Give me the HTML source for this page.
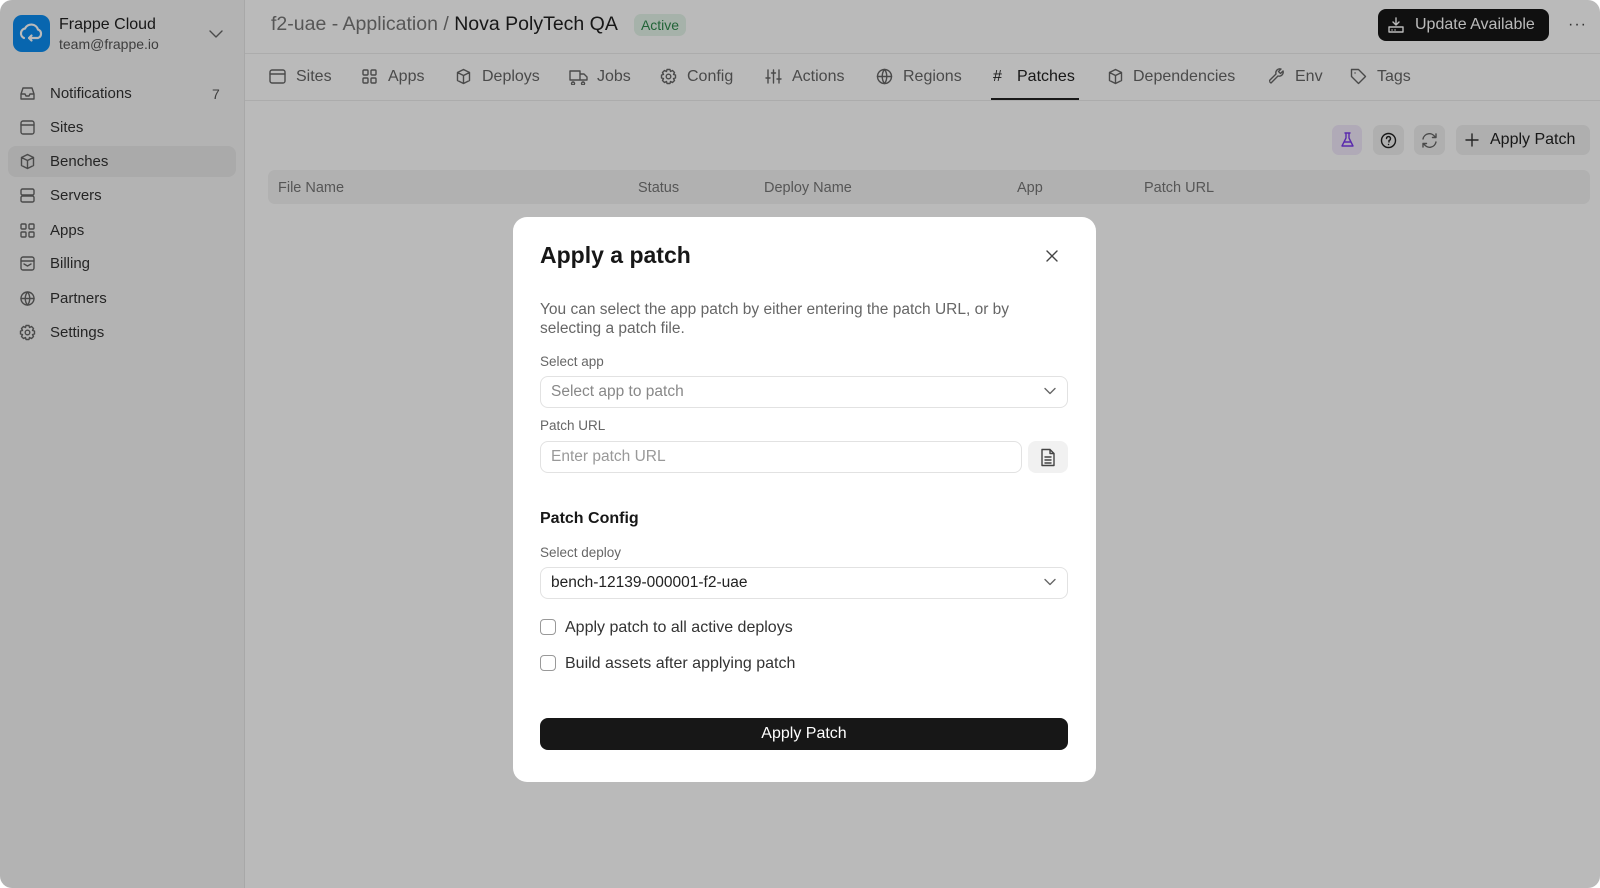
<!DOCTYPE html>
<html><head><meta charset="utf-8"><style>
*{box-sizing:border-box;margin:0;padding:0}
body{width:1600px;height:888px;background:#fff;font-family:"Liberation Sans",sans-serif;overflow:hidden;position:relative}
.frame{position:absolute;left:0;top:0;width:1600px;height:888px;border-radius:12px;overflow:hidden;background:#fff}
.side{position:absolute;left:0;top:0;width:245px;height:888px;background:#f6f6f6;border-right:1px solid #e6e6e6}
.abs{position:absolute}
.ic{position:absolute;stroke:#666;fill:none;stroke-width:1.4;stroke-linecap:round;stroke-linejoin:round}
.sitem{position:absolute;left:50px;font-size:15px;color:#333}
.tab{position:absolute;top:68px;font-size:16px;color:#666}
.th{position:absolute;top:179px;font-size:14.5px;color:#777}
.ov{position:absolute;inset:0;background:rgba(0,0,0,0.27)}
.modal{position:absolute;left:513px;top:217px;width:583px;height:565px;background:#fff;border-radius:14px}
.lbl{position:absolute;left:27px;font-size:13.5px;color:#666}
.box{position:absolute;left:27px;width:528px;height:32px;border:1px solid #e2e2e2;border-radius:8px;font-size:15.5px;padding-left:10px;line-height:30px}
.cb{position:absolute;left:27px;width:16px;height:16px;border:1.5px solid #999;border-radius:4px}
.cbt{position:absolute;left:52px;font-size:16px;color:#333}
</style></head><body><div class="frame">
<div class="side">
 <div class="abs" style="left:13px;top:15px;width:37px;height:37px;border-radius:9px;background:#0b8df0"></div>
 <svg class="abs" style="left:13px;top:15px" width="37" height="37" viewBox="0 0 37 37"><path d="M11 23a5 5 0 0 1 1-9.5 7 7 0 0 1 13 1 4.5 4.5 0 0 1 0 8.5H16M16 23l2.5-2.5M16 23l2.5 2.5" stroke="#fff" stroke-width="2.2" fill="none" stroke-linecap="round"/></svg>
 <div class="abs" style="left:59px;top:16px;font-size:16px;color:#222">Frappe Cloud</div>
 <div class="abs" style="left:59px;top:36px;font-size:14px;color:#555">team@frappe.io</div>
 <svg class="ic" style="left:209px;top:29px" width="14" height="10"><path d="M1 2l6 6 6-6"/></svg>
 <div class="abs" style="left:8px;top:146px;width:228px;height:31px;background:#e9e9e9;border-radius:8px"></div>
 <svg class="ic" style="left:19px;top:85px" width="17" height="17"><path d="M2 9h4l1 2h3l1-2h4M2 9l2-6h9l2 6v5H2z"/></svg>
 <div class="sitem" style="top:85px">Notifications</div><div class="abs" style="left:212px;top:86px;font-size:14px;color:#555">7</div>
 <svg class="ic" style="left:19px;top:119px" width="17" height="17"><rect x="2" y="2" width="13" height="13" rx="2"/><path d="M2 6h13"/></svg>
 <div class="sitem" style="top:119px">Sites</div>
 <svg class="ic" style="left:19px;top:153px" width="17" height="17"><path d="M8.5 1.5l6 3v8l-6 3-6-3v-8zM2.5 4.5l6 3 6-3M8.5 7.5v8"/></svg>
 <div class="sitem" style="top:153px">Benches</div>
 <svg class="ic" style="left:19px;top:187px" width="17" height="17"><rect x="2" y="2" width="13" height="6" rx="1.5"/><rect x="2" y="9" width="13" height="6" rx="1.5"/></svg>
 <div class="sitem" style="top:187px">Servers</div>
 <svg class="ic" style="left:19px;top:222px" width="17" height="17"><rect x="2" y="2" width="5" height="5" rx="1"/><rect x="10" y="2" width="5" height="5" rx="1"/><rect x="2" y="10" width="5" height="5" rx="1"/><rect x="10" y="10" width="5" height="5" rx="1"/></svg>
 <div class="sitem" style="top:222px">Apps</div>
 <svg class="ic" style="left:19px;top:255px" width="17" height="17"><rect x="2" y="2" width="13" height="13" rx="2"/><path d="M2 6h13M5 9l3.5 2 3.5-2"/></svg>
 <div class="sitem" style="top:255px">Billing</div>
 <svg class="ic" style="left:19px;top:290px" width="17" height="17"><circle cx="8.5" cy="8.5" r="6.5"/><path d="M2 8.5h13M8.5 2c-3 3.5-3 9.5 0 13M8.5 2c3 3.5 3 9.5 0 13"/></svg>
 <div class="sitem" style="top:290px">Partners</div>
 <svg class="ic" style="left:19px;top:324px" width="17" height="17"><circle cx="8.5" cy="8.5" r="2.3"/><path d="M7 1.5h3l.5 2 2-1 2 2-1 2 2 .5v3l-2 .5 1 2-2 2-2-1-.5 2H7l-.5-2-2 1-2-2 1-2-2-.5V7l2-.5-1-2 2-2 2 1z"/></svg>
 <div class="sitem" style="top:324px">Settings</div>
</div>
<div class="abs" style="left:245px;top:53px;width:1355px;height:1px;background:#ececec"></div>
<div class="abs" style="left:245px;top:100px;width:1355px;height:1px;background:#ececec"></div>
<div class="abs" style="left:271px;top:13px;font-size:19.5px;color:#777">f2-uae - Application / <span style="color:#222">Nova PolyTech QA</span></div>
<div class="abs" style="left:634px;top:14px;width:52px;height:22px;border-radius:7px;background:#e4f5e9;color:#2f8a4d;font-size:14px;text-align:center;line-height:22px">Active</div>
<div class="abs" style="left:1378px;top:9px;width:171px;height:32px;border-radius:8px;background:#171717;color:#fff;font-size:16px;line-height:32px;padding-left:37px">Update Available</div>
<svg class="ic" style="left:1387px;top:16px;stroke:#fff" width="18" height="18"><path d="M9 2v7M6 6l3 3 3-3M2 11h14v5H2zM5 14h.1M8 14h.1"/></svg>
<div class="abs" style="left:1568px;top:16px;font-size:16px;color:#444;letter-spacing:1px">···</div>
<svg class="ic" style="left:269px;top:68px" width="17" height="17"><rect x="1" y="2" width="15" height="13" rx="2"/><path d="M1 6h15"/></svg><div class="tab" style="left:296px">Sites</div>
<svg class="ic" style="left:361px;top:68px" width="17" height="17"><rect x="2" y="2" width="5" height="5" rx="1"/><rect x="10" y="2" width="5" height="5" rx="1"/><rect x="2" y="10" width="5" height="5" rx="1"/><rect x="10" y="10" width="5" height="5" rx="1"/></svg><div class="tab" style="left:388px">Apps</div>
<svg class="ic" style="left:455px;top:68px" width="17" height="17"><path d="M8.5 1.5l6 3v8l-6 3-6-3v-8zM2.5 4.5l6 3 6-3M8.5 7.5v8"/></svg><div class="tab" style="left:482px">Deploys</div>
<svg class="ic" style="left:569px;top:68px" width="19" height="17"><path d="M1 3h10v9H1zM11 6h4l3 3v3h-7M4 14a1.5 1.5 0 1 0 .1 0M14 14a1.5 1.5 0 1 0 .1 0"/></svg><div class="tab" style="left:597px">Jobs</div>
<svg class="ic" style="left:660px;top:68px" width="17" height="17"><circle cx="8.5" cy="8.5" r="2.3"/><path d="M7 1.5h3l.5 2 2-1 2 2-1 2 2 .5v3l-2 .5 1 2-2 2-2-1-.5 2H7l-.5-2-2 1-2-2 1-2-2-.5V7l2-.5-1-2 2-2 2 1z"/></svg><div class="tab" style="left:687px">Config</div>
<svg class="ic" style="left:765px;top:68px" width="17" height="17"><path d="M3 2v13M8.5 2v13M14 2v13M1 10h4M6.5 5h4M12 11h4"/></svg><div class="tab" style="left:792px">Actions</div>
<svg class="ic" style="left:876px;top:68px" width="17" height="17"><circle cx="8.5" cy="8.5" r="7"/><path d="M1.5 8.5h14M8.5 1.5c-3 3.5-3 10.5 0 14M8.5 1.5c3 3.5 3 10.5 0 14"/></svg><div class="tab" style="left:903px">Regions</div>
<div class="tab" style="left:993px;color:#222">#</div><div class="tab" style="left:1017px;color:#222">Patches</div>
<div class="abs" style="left:991px;top:98px;width:88px;height:2px;background:#222"></div>
<svg class="ic" style="left:1107px;top:68px" width="17" height="17"><path d="M8.5 1.5l6 3v8l-6 3-6-3v-8zM2.5 4.5l6 3 6-3M8.5 7.5v8"/></svg><div class="tab" style="left:1133px">Dependencies</div>
<svg class="ic" style="left:1269px;top:68px" width="17" height="17"><path d="M2 15l7-7a4 4 0 0 0 5-5l-2.5 2.5-2-2L12 1a4 4 0 0 0-5 5l-7 7z"/></svg><div class="tab" style="left:1295px">Env</div>
<svg class="ic" style="left:1350px;top:68px" width="17" height="17"><path d="M1.5 1.5h7l7 7-7 7-7-7zM5 5h.1"/></svg><div class="tab" style="left:1377px">Tags</div>
<div class="abs" style="left:1332px;top:125px;width:30px;height:30px;border-radius:7px;background:#f1e9fb"></div>
<svg class="ic" style="left:1339px;top:131px;stroke:#7c3aed" width="17" height="18"><path d="M6 2h5M7 2v5l-4 8h11l-4-8V2M5 11h7"/></svg>
<div class="abs" style="left:1373px;top:125px;width:31px;height:30px;border-radius:7px;background:#f0f0f0"></div>
<svg class="ic" style="left:1380px;top:132px;stroke:#222" width="17" height="17"><circle cx="8.5" cy="8.5" r="7"/><path d="M6.5 6.5a2 2 0 1 1 2.5 2v1.5M8.5 12.5h.1"/></svg>
<div class="abs" style="left:1414px;top:125px;width:31px;height:30px;border-radius:7px;background:#f0f0f0"></div>
<svg class="ic" style="left:1421px;top:132px" width="17" height="17"><path d="M2 7a6.5 6.5 0 0 1 12-2M15 2v3.5h-3.5M15 10a6.5 6.5 0 0 1-12 2M2 15v-3.5h3.5"/></svg>
<div class="abs" style="left:1456px;top:125px;width:134px;height:30px;border-radius:7px;background:#f0f0f0;font-size:16px;color:#222;line-height:30px;padding-left:34px">Apply Patch</div>
<svg class="ic" style="left:1465px;top:133px;stroke:#333" width="14" height="14"><path d="M7 1v12M1 7h12"/></svg>
<div class="abs" style="left:268px;top:170px;width:1322px;height:34px;border-radius:7px;background:#f3f3f3"></div>
<div class="th" style="left:278px;top:180px">File Name</div><div class="th" style="left:638px;top:180px">Status</div><div class="th" style="left:764px;top:180px">Deploy Name</div><div class="th" style="left:1017px;top:180px">App</div><div class="th" style="left:1144px;top:180px">Patch URL</div>
<div class="ov"></div>
<div class="modal">
 <div class="abs" style="left:27px;top:25px;font-size:23px;font-weight:bold;color:#171717">Apply a patch</div>
 <svg class="ic" style="left:532px;top:32px;stroke:#444" width="14" height="14"><path d="M2 2l10 10M12 2L2 12"/></svg>
 <div class="abs" style="left:27px;top:83px;width:520px;font-size:15.5px;line-height:19px;color:#666">You can select the app patch by either entering the patch URL, or by selecting a patch file.</div>
 <div class="lbl" style="top:137px">Select app</div>
 <div class="box" style="top:159px;color:#888">Select app to patch</div>
 <svg class="ic" style="left:531px;top:170px" width="12" height="8"><path d="M1 1.5l5 5 5-5"/></svg>
 <div class="lbl" style="top:201px">Patch URL</div>
 <div class="box" style="top:224px;width:482px;color:#999">Enter patch URL</div>
 <div class="abs" style="left:515px;top:224px;width:40px;height:32px;border-radius:8px;background:#f1f1f1"></div>
 <svg class="ic" style="left:526px;top:231px;stroke:#444" width="18" height="19"><path d="M3 1.5h8l4 4v12H3zM11 1.5v4h4M6 9h6M6 12h6M6 15h6"/></svg>
 <div class="abs" style="left:27px;top:293px;font-size:16px;font-weight:bold;color:#171717">Patch Config</div>
 <div class="lbl" style="top:328px">Select deploy</div>
 <div class="box" style="top:350px;color:#222">bench-12139-000001-f2-uae</div>
 <svg class="ic" style="left:531px;top:361px" width="12" height="8"><path d="M1 1.5l5 5 5-5"/></svg>
 <div class="cb" style="top:402px"></div><div class="cbt" style="top:402px">Apply patch to all active deploys</div>
 <div class="cb" style="top:438px"></div><div class="cbt" style="top:438px">Build assets after applying patch</div>
 <div class="abs" style="left:27px;top:501px;width:528px;height:32px;border-radius:8px;background:#171717;color:#fff;font-size:16px;text-align:center;line-height:32px">Apply Patch</div>
</div>
</div></body></html>
